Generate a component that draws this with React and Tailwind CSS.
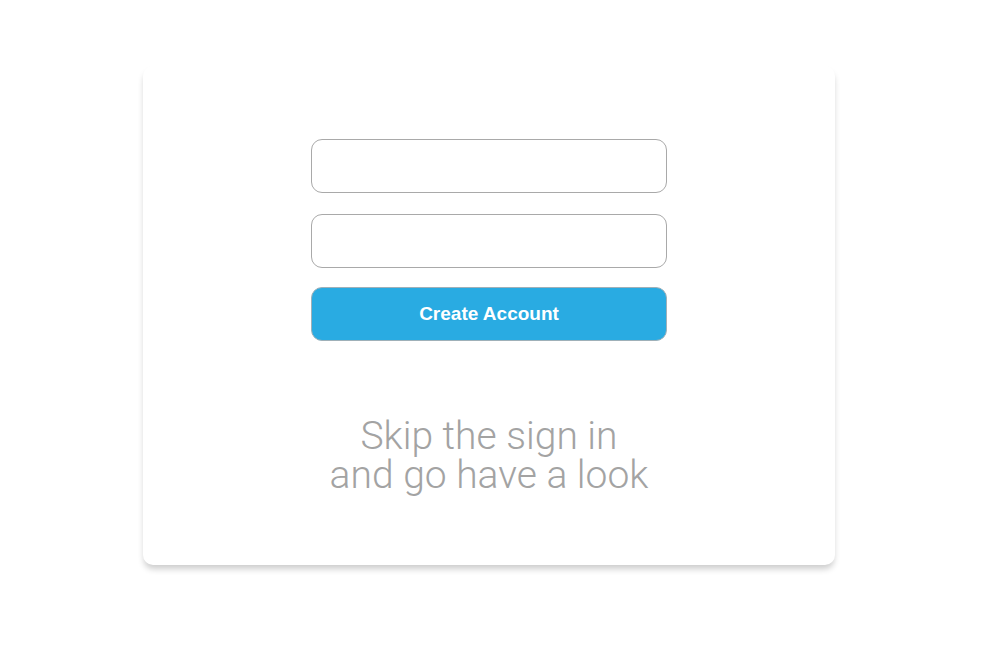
export default function App() {
  return (
    <div className="w-[1000px] h-[650px] bg-white flex flex-col items-center">
      <div className="mt-[66px] w-[692px] h-[499px] ml-[-22px] bg-white rounded-[10px] shadow-[0_5px_6px_-1px_rgba(0,0,0,0.2)] flex flex-col items-center">
        <div className="mt-[73px] w-[356px] flex flex-col gap-[21px]">
          <div className="h-[54px] rounded-[11px] border border-[#a9a9a9] bg-white" />
          <div className="h-[54px] rounded-[11px] border border-[#a9a9a9] bg-white" />
          <button className="h-[54px] -mt-[2px] rounded-[11px] border border-[#9fb0b8] bg-[#29abe2] text-white font-bold text-[19px] font-['Liberation_Sans',Arial,sans-serif]">
            Create Account
          </button>
        </div>
        <div className="mt-[76px] text-center text-[#a3a3a3] text-[39px] leading-[39px] font-light font-['Roboto',sans-serif]">
          <div>Skip the sign in</div>
          <div>and go have a look</div>
        </div>
      </div>
    </div>
  );
}
